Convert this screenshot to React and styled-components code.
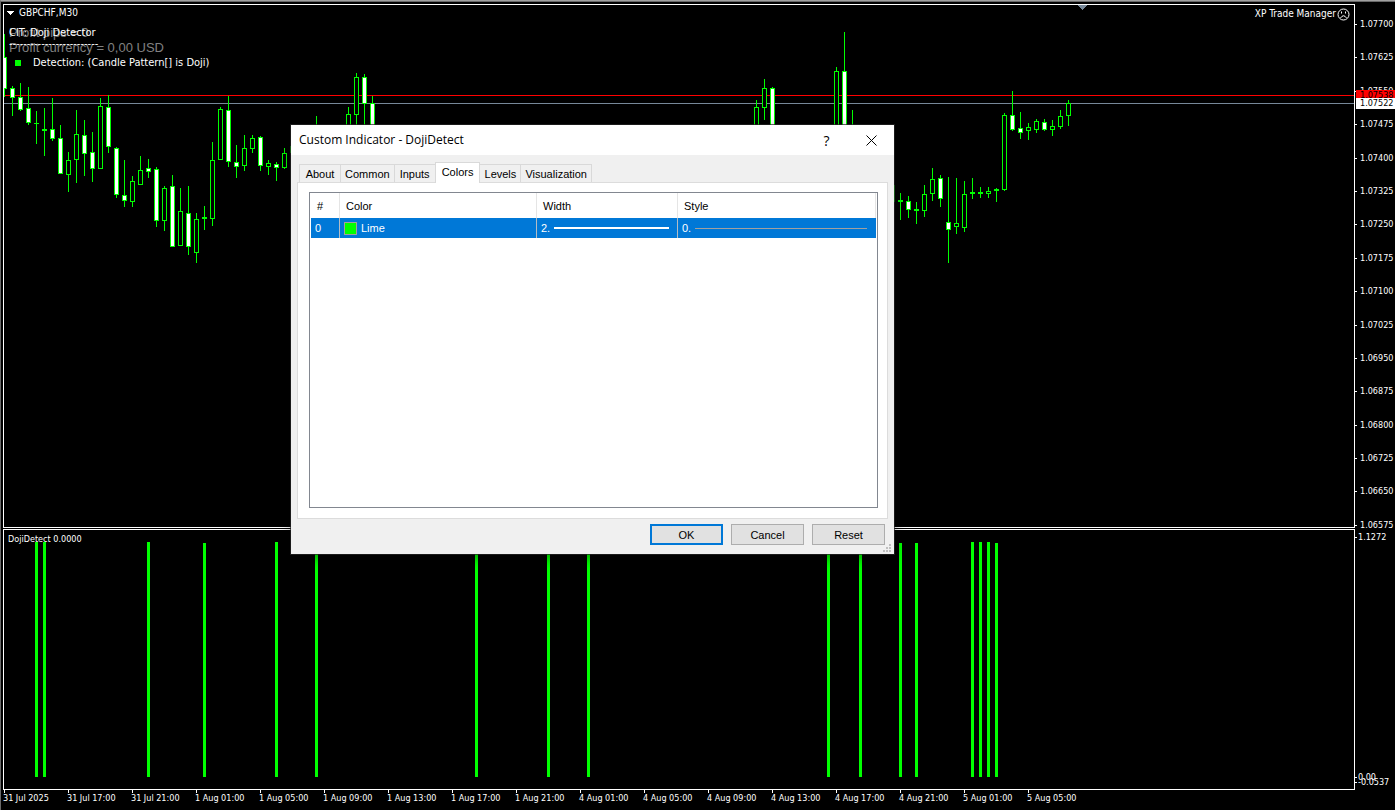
import { useState } from "react";
import { createGlobalStyle, styled } from "styled-components";

const LIME = "#00ff00";

// x, high, body top, body bottom, low, direction (1 = up, 0 = down)
const CANDLES = [
  [4, 34, 57, 89, 97, 0],
  [12, 86, 88, 98, 116, 0],
  [20, 83, 97, 110, 111, 0],
  [28, 87, 108, 123, 125, 0],
  [36, 111, 123, 124, 144, 1],
  [44, 108, 129, 131, 156, 1],
  [52, 98, 129, 139, 141, 0],
  [60, 125, 138, 174, 174, 0],
  [68, 152, 160, 175, 192, 1],
  [76, 110, 134, 160, 183, 1],
  [84, 120, 135, 154, 176, 0],
  [92, 132, 152, 169, 182, 0],
  [100, 98, 106, 169, 169, 1],
  [108, 95, 107, 147, 153, 0],
  [116, 147, 148, 195, 198, 0],
  [124, 160, 195, 201, 207, 0],
  [132, 176, 181, 202, 207, 1],
  [140, 156, 170, 185, 185, 1],
  [148, 159, 168, 172, 178, 0],
  [156, 167, 169, 221, 227, 0],
  [164, 186, 188, 221, 231, 1],
  [172, 175, 186, 247, 247, 0],
  [180, 188, 211, 246, 246, 1],
  [188, 186, 213, 247, 255, 0],
  [196, 213, 219, 253, 263, 1],
  [204, 206, 217, 219, 230, 1],
  [212, 142, 160, 219, 226, 1],
  [220, 107, 109, 160, 160, 1],
  [228, 96, 110, 162, 167, 0],
  [236, 145, 162, 167, 178, 0],
  [244, 135, 148, 166, 171, 1],
  [252, 135, 138, 149, 153, 1],
  [260, 136, 137, 166, 171, 0],
  [268, 160, 163, 167, 175, 1],
  [276, 162, 164, 168, 181, 0],
  [284, 148, 153, 168, 169, 1],
  [292, 140, 146, 153, 160, 1],
  [316, 116, 130, 150, 160, 1],
  [348, 107, 114, 140, 150, 1],
  [356, 73, 77, 115, 130, 1],
  [364, 74, 77, 104, 130, 0],
  [372, 96, 103, 140, 150, 0],
  [756, 100, 107, 140, 150, 1],
  [764, 79, 88, 108, 120, 1],
  [772, 87, 88, 140, 150, 0],
  [836, 67, 71, 140, 150, 1],
  [844, 32, 71, 140, 150, 0],
  [852, 110, 130, 150, 160, 0],
  [892, 180, 185, 202, 210, 1],
  [900, 193, 200, 202, 220, 1],
  [908, 196, 201, 210, 218, 0],
  [916, 202, 209, 211, 224, 1],
  [924, 185, 194, 211, 217, 1],
  [932, 168, 179, 194, 201, 1],
  [940, 175, 178, 199, 207, 0],
  [948, 177, 222, 230, 263, 0],
  [956, 178, 223, 227, 234, 1],
  [964, 181, 194, 228, 232, 1],
  [972, 178, 192, 194, 199, 1],
  [980, 187, 192, 194, 198, 1],
  [988, 187, 191, 194, 198, 1],
  [996, 188, 189, 191, 202, 1],
  [1004, 113, 115, 190, 191, 1],
  [1012, 91, 115, 130, 131, 0],
  [1020, 112, 128, 133, 139, 0],
  [1028, 123, 127, 131, 140, 1],
  [1036, 119, 121, 130, 133, 1],
  [1044, 119, 122, 130, 131, 0],
  [1052, 120, 126, 130, 136, 1],
  [1060, 110, 116, 127, 129, 1],
  [1068, 100, 103, 116, 126, 1],
];

// x and top of every doji signal
const SIGNALS = [
  [36, 542], [44, 542], [148, 542], [204, 543], [276, 542], [316, 542],
  [476, 542], [548, 542], [588, 542], [828, 542], [860, 542], [900, 543],
  [916, 543], [972, 542], [980, 542], [988, 542], [996, 543],
];

const PRICES = [
  "1.07700", "1.07625", "1.07550", "1.07475", "1.07400", "1.07325",
  "1.07250", "1.07175", "1.07100", "1.07025", "1.06950", "1.06875",
  "1.06800", "1.06725", "1.06650", "1.06575",
];

const TIMES = [
  "31 Jul 2025", "31 Jul 17:00", "31 Jul 21:00", "1 Aug 01:00",
  "1 Aug 05:00", "1 Aug 09:00", "1 Aug 13:00", "1 Aug 17:00",
  "1 Aug 21:00", "4 Aug 01:00", "4 Aug 05:00", "4 Aug 09:00",
  "4 Aug 13:00", "4 Aug 17:00", "4 Aug 21:00", "5 Aug 01:00",
  "5 Aug 05:00",
];

const TABS = ["About", "Common", "Inputs", "Colors", "Levels", "Visualization"];

const GlobalStyle = createGlobalStyle`
  * {
    box-sizing: border-box;
  }

  body {
    margin: 0;
    background: #000;
  }
`;

const Terminal = styled.main`
  position: relative;
  display: grid;
  grid-template-columns: minmax(0, 1fr) 40px;
  grid-template-rows: auto 1fr 20px;
  min-height: 100vh;
  padding: 3px 0 0 2px;
  border-top: 1px solid #a0a0a0;
  border-left: 1px solid #696969;
  box-shadow: inset 0 1px #696969;
  overflow: hidden;
  background: #000;
  color: #fff;
  font-family: "DejaVu Sans Condensed", "DejaVu Sans", sans-serif;
  font-size: 9px;
  line-height: 11px;
`;

const Plot = styled.section`
  position: relative;
  margin-top: ${({ $gap }) => $gap || 0}px;
  border: 1px solid #fff;
`;

const Drawing = styled.svg`
  display: block;
  width: 100%;
  height: ${({ $height }) => $height}px;
  shape-rendering: crispEdges;
`;

const Overlay = styled.div`
  position: absolute;
  top: ${({ $top }) => $top}px;
  left: ${({ $left }) => $left}px;
  display: flex;
  align-items: center;
  gap: ${({ $gap }) => $gap || 0}px;
  color: ${({ $color }) => $color || "#fff"};
  font-family: ${({ $arial }) => ($arial ? '"Liberation Sans", Arial, sans-serif' : "inherit")};
  font-size: ${({ $size }) => $size || 9}px;
  line-height: 14px;
  white-space: pre;
`;

const Expert = styled(Overlay)`
  left: auto;
  right: 4px;
`;

const Dot = styled.span`
  width: 6px;
  height: 6px;
  background: ${LIME};
`;

const Axis = styled.div`
  position: relative;
  display: flex;
  flex-direction: column;
  justify-content: space-between;
  padding-top: ${({ $start }) => $start}px;
  margin-bottom: ${({ $end }) => $end}px;
`;

const AxisLabel = styled.span`
  display: flex;
  align-items: center;
  gap: ${({ $gap }) => $gap || 3}px;

  &::before {
    content: "";
    width: 2px;
    height: 1px;
    background: #fff;
  }
`;

const PriceTag = styled.span`
  position: absolute;
  top: ${({ $top }) => $top}px;
  left: 1px;
  right: 0;
  padding-left: 4px;
  background: ${({ $color }) => $color};
  color: #000;
`;

const LowLabels = styled.div`
  display: flex;
  flex-direction: column;

  & > :last-child {
    margin-top: -6px;
  }
`;

const TimeAxis = styled.div`
  grid-column: 1 / -1;
  display: flex;
`;

const TimeLabel = styled.span`
  flex: 0 0 64px;
  white-space: nowrap;

  &::before {
    content: "";
    display: block;
    width: 1px;
    height: 3px;
    margin-left: 1px;
    background: #fff;
  }
`;

const Dialog = styled.div`
  position: absolute;
  top: 124px;
  left: 290px;
  width: 603px;
  background: #f0f0f0;
  box-shadow: 0 0 0 1px rgba(38, 38, 38, 0.7), 0 4px 12px rgba(0, 0, 0, 0.4);
  color: #000;
  font-family: "Liberation Sans", Arial, sans-serif;
  font-size: 11px;
  line-height: 14px;
`;

const TitleBar = styled.header`
  display: flex;
  align-items: center;
  height: 30px;
  padding-left: 8px;
  background: #fff;
`;

const Title = styled.h1`
  flex: 1;
  margin: 0;
  font-family: "Open Sans", "Noto Sans", sans-serif;
  font-size: 12px;
  font-weight: 400;
`;

const TitleButton = styled.button`
  display: grid;
  place-items: center;
  width: 45px;
  height: 30px;
  padding: 0;
  border: 0;
  background: none;
  color: #000;
  font: 14px "Open Sans", "Noto Sans", sans-serif;
`;

const TabList = styled.div`
  display: flex;
  align-items: flex-end;
  height: 27px;
  padding: 0 8px;
`;

const Tab = styled.button`
  position: relative;
  min-width: 42px;
  height: ${({ $active }) => ($active ? 21 : 18)}px;
  margin: 0 0 ${({ $active }) => ($active ? -1 : 0)}px -1px;
  padding: ${({ $active }) => ($active ? "0 6px 2px" : "0 4px")};
  border: 1px solid #d9d9d9;
  border-bottom: 0;
  background: ${({ $active }) => ($active ? "#fff" : "#f0f0f0")};
  color: #000;
  font: inherit;

  &:first-child {
    margin-left: 0;
  }
`;

const Pane = styled.div`
  margin: 0 6px;
  padding: 9px 9px 10px 11px;
  border: 1px solid #dcdcdc;
  background: #fff;
`;

const ListBox = styled.div`
  height: 316px;
  padding: 0 1px;
  border: 1px solid #828790;
`;

const Table = styled.table`
  width: 100%;
  table-layout: fixed;
  border-collapse: separate;
  border-spacing: 0;
`;

const HeadCell = styled.th`
  width: ${({ $width }) => ($width ? `${$width}px` : "auto")};
  height: 25px;
  padding: 0 0 0 6px;
  border-right: 1px solid #e5e5e5;
  font-weight: 400;
  text-align: left;
`;

const Cell = styled.td`
  height: 20px;
  padding: 0 8px 0 4px;
  border-right: 1px solid ${({ $last }) => ($last ? "#0078d7" : "#b4bcc4")};
  background: #0078d7;
  color: #fff;
`;

const CellContent = styled.div`
  display: flex;
  align-items: center;
  gap: 4px;
`;

const Swatch = styled.span`
  width: 13px;
  height: 13px;
  border: 1px solid #a0a0a0;
  background: ${LIME};
`;

const Stroke = styled.span`
  flex: 1;
  height: ${({ $size }) => $size}px;
  background: ${({ $color }) => $color};
`;

const Actions = styled.footer`
  position: relative;
  display: flex;
  justify-content: flex-end;
  gap: 8px;
  padding: 5px 9px 9px;
`;

const Button = styled.button`
  width: 73px;
  height: 21px;
  padding: 0;
  border: ${({ $primary }) => ($primary ? "2px solid #0078d7" : "1px solid #adadad")};
  background: #e1e1e1;
  color: #000;
  font: inherit;
`;

const Grip = styled.svg`
  position: absolute;
  right: 3px;
  bottom: 2px;
  shape-rendering: crispEdges;
`;

function Candle({ x, high, top, bottom, low, up }) {
  return (
    <g>
      <rect x={x} y={high} width="1" height={low - high} fill={LIME} />
      <rect x={x - 2} y={top} width="5" height={bottom - top} fill={LIME} />
      {bottom - top > 2 && (
        <rect
          x={x - 1}
          y={top + 1}
          width="3"
          height={bottom - top - 2}
          fill={up ? "#000" : "#fff"}
        />
      )}
    </g>
  );
}

function PricePlot() {
  return (
    <Plot>
      <Drawing $height={522}>
        <rect y="90" width="100%" height="1" fill="#ff0000" />
        <rect y="98" width="100%" height="1" fill="#778899" />
        <g transform="translate(-4 -5)">
          {CANDLES.map(([x, high, top, bottom, low, up]) => (
            <Candle key={x} x={x} high={high} top={top} bottom={bottom} low={low} up={up} />
          ))}
          <path d="M1078 5h9l-4.500 5z" fill="#778899" />
          <path d="M7 11h7l-3.500 4z" fill="#fff" />
        </g>
      </Drawing>
      <Overlay $top={1} $left={15} $size={10}>GBPCHF,M30</Overlay>
      <Overlay $top={21} $left={5} $size={13} $color="#808080" $arial>Profit pips = 0</Overlay>
      <Overlay $top={36} $left={5} $size={13} $color="#808080" $arial>Profit currency = 0,00 USD</Overlay>
      <Overlay $top={21} $left={5} $size={11}>CIT: Doji Detector</Overlay>
      <Overlay $top={32} $left={5} $size={11}>-------------------------</Overlay>
      <Overlay $top={51} $left={11} $gap={12} $size={11}>
        <Dot />
        Detection: (Candle Pattern[] is Doji)
      </Overlay>
      <Expert $top={2} $gap={1} $size={10}>
        XP Trade Manager
        <svg width="13" height="13" viewBox="0 0 13 13" fill="none" stroke="#fff">
          <circle cx="6.500" cy="6.500" r="5.500" />
          <path d="M3.500 10Q6.500 5.500 9.500 10" />
          <path d="M4.500 3.500v2M8.500 3.500v2" />
        </svg>
      </Expert>
    </Plot>
  );
}

function IndicatorPlot() {
  return (
    <Plot $gap={1}>
      <Drawing $height={259}>
        <g transform="translate(-4 -530)">
          {SIGNALS.map(([x, top]) => (
            <rect key={x} x={x - 1} y={top} width="3" height={777 - top} fill={LIME} />
          ))}
        </g>
      </Drawing>
      <Overlay $top={2} $left={4}>DojiDetect 0.0000</Overlay>
    </Plot>
  );
}

function IndicatorDialog() {
  const [activeTab, setActiveTab] = useState("Colors");

  return (
    <Dialog role="dialog" aria-labelledby="dialog-title">
      <TitleBar>
        <Title id="dialog-title">Custom Indicator - DojiDetect</Title>
        <TitleButton type="button">?</TitleButton>
        <TitleButton type="button" aria-label="Close">
          <svg width="11" height="11" viewBox="0 0 11 11" stroke="#000">
            <path d="M.5.5l10 10M10.500.5l-10 10" />
          </svg>
        </TitleButton>
      </TitleBar>
      <TabList role="tablist">
        {TABS.map((tab) => (
          <Tab
            key={tab}
            type="button"
            role="tab"
            aria-selected={tab === activeTab}
            $active={tab === activeTab}
            onClick={() => setActiveTab(tab)}
          >
            {tab}
          </Tab>
        ))}
      </TabList>
      <Pane>
        <ListBox>
          <Table>
            <thead>
              <tr>
                <HeadCell $width={29}>#</HeadCell>
                <HeadCell $width={197}>Color</HeadCell>
                <HeadCell $width={141}>Width</HeadCell>
                <HeadCell>Style</HeadCell>
              </tr>
            </thead>
            <tbody>
              <tr>
                <Cell>0</Cell>
                <Cell>
                  <CellContent>
                    <Swatch />
                    Lime
                  </CellContent>
                </Cell>
                <Cell>
                  <CellContent>
                    2.
                    <Stroke $size={2} $color="#fff" />
                  </CellContent>
                </Cell>
                <Cell $last>
                  <CellContent>
                    0.
                    <Stroke $size={1} $color="#a0a0a0" />
                  </CellContent>
                </Cell>
              </tr>
            </tbody>
          </Table>
        </ListBox>
      </Pane>
      <Actions>
        <Button type="button" $primary>OK</Button>
        <Button type="button">Cancel</Button>
        <Button type="button">Reset</Button>
        <Grip width="8" height="8" fill="#bfbfbf">
          <path d="M6 0h2v2h-2zM3 3h2v2h-2zM6 3h2v2h-2zM0 6h2v2h-2zM3 6h2v2h-2zM6 6h2v2h-2z" />
        </Grip>
      </Actions>
    </Dialog>
  );
}

export default function App() {
  return (
    <>
      <GlobalStyle />
      <Terminal>
        <PricePlot />
        <Axis $start={15} $end={-3}>
          {PRICES.map((price) => (
            <AxisLabel key={price}>{price}</AxisLabel>
          ))}
          <PriceTag $top={86} $color="#ff0000">1.07538</PriceTag>
          <PriceTag $top={94} $color="#ffffff">1.07522</PriceTag>
        </Axis>
        <IndicatorPlot />
        <Axis $start={4} $end={2}>
          <AxisLabel $gap={1}>1.1272</AxisLabel>
          <LowLabels>
            <AxisLabel $gap={1}>0.00</AxisLabel>
            <AxisLabel $gap={1}>-0.0537</AxisLabel>
          </LowLabels>
        </Axis>
        <TimeAxis>
          {TIMES.map((time) => (
            <TimeLabel key={time}>{time}</TimeLabel>
          ))}
        </TimeAxis>
        <IndicatorDialog />
      </Terminal>
    </>
  );
}
